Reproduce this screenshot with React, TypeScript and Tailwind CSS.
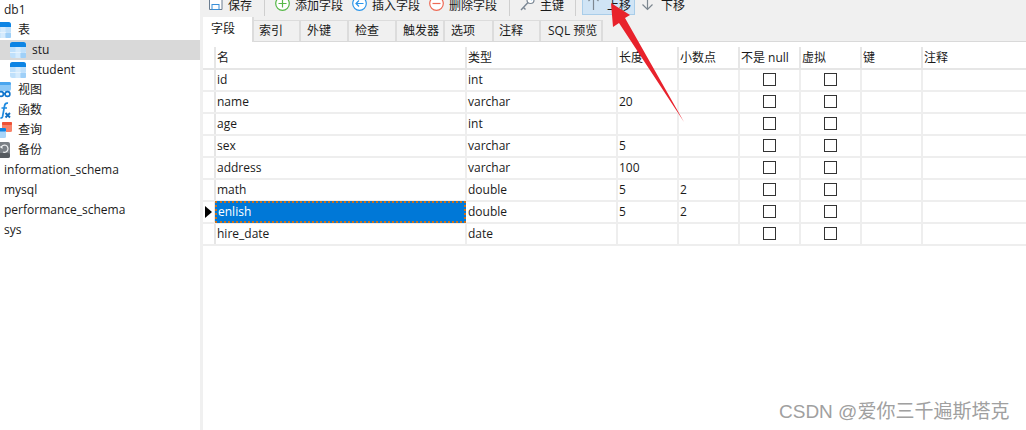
import React from 'react';

const FONT = '"Open Sans", "Noto Sans CJK SC", sans-serif';

const TableIcon = ({ className = '' }: { className?: string }) => (
  <svg width="16" height="16" viewBox="0 0 16 16" className={`shrink-0 ${className}`}>
    <rect x="0" y="0" width="16" height="16" rx="2.500" fill="#bfe0fb" />
    <path d="M0 5V2.500A2.500 2.500 0 0 1 2.500 0h11A2.500 2.500 0 0 1 16 2.500V5z" fill="#0c84e4" />
    <rect x="5.500" y="5" width="5" height="11" fill="#d5ebfd" />
    <rect x="0" y="10" width="16" height="1" fill="#e6f3fe" />
    <rect x="10.500" y="10.500" width="5.500" height="5.500" rx="1" fill="#9fd0f8" />
  </svg>
);

const ViewIcon = () => (
  <svg width="16" height="16" viewBox="0 0 16 16" className="ml-[-5px] shrink-0">
    <rect x="0" y="0" width="16" height="9" rx="2" fill="#8cc8f7" />
    <rect x="0" y="0" width="16" height="3" rx="1.500" fill="#4aa5ee" />
    <circle cx="6" cy="12" r="2.400" fill="#fff" stroke="#0f75cc" strokeWidth="1.600" />
    <circle cx="12.500" cy="12" r="2.400" fill="#fff" stroke="#0f75cc" strokeWidth="1.600" />
    <rect x="8.500" y="11" width="1.500" height="1.600" fill="#0f75cc" />
  </svg>
);

const FuncIcon = () => (
  <svg width="16" height="17" viewBox="0 0 16 17" className="ml-[-5px] shrink-0">
    <path d="M13 1.200C11 .8 10 1.600 9.600 3.500L7.600 14.500C7.300 15.800 6.600 16.200 5.400 15.800M6.500 6h5.500" fill="none" stroke="#1e8ae0" strokeWidth="1.700" />
    <path d="M10.500 11l4.500 4.500M15 11l-4.500 4.500" fill="none" stroke="#1170c4" strokeWidth="1.900" />
  </svg>
);

const QueryIcon = () => (
  <svg width="17" height="17" viewBox="0 0 17 17" className="ml-[-5px] shrink-0">
    <rect x="7" y="0" width="10" height="10" rx="1.500" fill="#f7836a" />
    <rect x="7" y="0" width="10" height="3" rx="1" fill="#ee5236" />
    <rect x="0" y="6" width="11" height="10" rx="1.500" fill="#a9d5f9" />
    <rect x="0" y="6" width="11" height="3.500" rx="1" fill="#0c84e4" />
  </svg>
);

const BackupIcon = () => (
  <svg width="15" height="16" viewBox="0 0 15 16" className="ml-[-5px] shrink-0">
    <rect x="0" y="0" width="15" height="16" rx="2" fill="#7a7f85" />
    <rect x="0" y="11" width="15" height="5" rx="2" fill="#565b60" />
    <path d="M6 5.500A3.600 3.600 0 1 1 8 10" fill="none" stroke="#eef0f1" strokeWidth="1.200" />
    <path d="M4.500 4.500h3v2.500z" fill="#eef0f1" />
  </svg>
);

const SaveIcon = () => (
  <svg width="15" height="15" viewBox="0 0 15 15" className="shrink-0">
    <path d="M1.500 1h10L14 3.500V13.500H1.500z" fill="#fff" stroke="#6b7d90" />
    <rect x="4" y="8.500" width="7" height="5" fill="#fff" stroke="#3a8fd8" />
  </svg>
);

const CircleIcon = ({ color, kind }: { color: string; kind: 'plus' | 'left' | 'minus' }) => (
  <svg width="15" height="15" viewBox="0 0 15 15" className="shrink-0">
    <circle cx="7.500" cy="7.500" r="6.800" fill="#fff" stroke={color} strokeWidth="1.200" />
    {kind === 'plus' && <path d="M7.500 3.500v8M3.500 7.500h8" stroke={color} strokeWidth="1.200" />}
    {kind === 'minus' && <path d="M3.500 7.500h8" stroke={color} strokeWidth="1.200" />}
    {kind === 'left' && <path d="M11.500 7.500H4M7 4.500l-3 3 3 3" fill="none" stroke={color} strokeWidth="1.200" />}
  </svg>
);

const KeyIcon = () => (
  <svg width="15" height="15" viewBox="0 0 15 15" className="shrink-0">
    <circle cx="10.500" cy="4" r="3.500" fill="#fff" stroke="#7b8794" strokeWidth="1.200" />
    <circle cx="11.500" cy="3.200" r="1" fill="#2b8fe0" />
    <path d="M8 6.500L1 14M3.500 11.500l2 2" fill="none" stroke="#7b8794" strokeWidth="1.400" />
  </svg>
);

const VArrow = ({ up }: { up: boolean }) => (
  <svg width="13" height="15" viewBox="0 0 13 15" className="shrink-0">
    <path d={up ? 'M6.500 1v14M1.500 6l5-5 5 5' : 'M6.500 0v13M1.500 8.500l5 5 5-5'} fill="none" stroke="#7d8790" strokeWidth="1.200" />
  </svg>
);

const Sep = ({ className }: { className: string }) => <div className={`h-[16px] w-px shrink-0 bg-[#cfcfcf] ${className}`} />;

const ToolBtn = ({ icon, label, className = '' }: { icon: React.ReactNode; label: string; className?: string }) => (
  <div className={`flex h-[15px] shrink-0 items-center gap-[5px] ${className}`}>
    <div className="-mt-[9px] shrink-0">{icon}</div>
    <span className="-mt-[3px] whitespace-nowrap">{label}</span>
  </div>
);

const tabs = [
  ['字段', 'w-[51px] pl-2'],
  ['索引', 'w-[47px] pl-[5px]'],
  ['外键', 'w-[48px] pl-[6px]'],
  ['检查', 'w-[48px] pl-[6px]'],
  ['触发器', 'w-[48px] pl-[6px]'],
  ['选项', 'w-[49px] pl-[6px]'],
  ['注释', 'w-[47px] pl-[5px]'],
  ['SQL 预览', 'w-[62px] pl-[7px]'],
];

const rows = [
  ['id', 'int', '', ''],
  ['name', 'varchar', '20', ''],
  ['age', 'int', '', ''],
  ['sex', 'varchar', '5', ''],
  ['address', 'varchar', '100', ''],
  ['math', 'double', '5', '2'],
  ['enlish', 'double', '5', '2'],
  ['hire_date', 'date', '', ''],
];

const headers = ['名', '类型', '长度', '小数点', '不是 null', '虚拟', '键', '注释'];

const GRID = 'grid grid-cols-[13px_251px_151px_61px_61px_61px_61px_61px_1fr]';

const Check = () => <div className="-mt-px h-[13px] w-[13px] border border-[#333]" />;

const TreeRow = ({ icon, label, active = false, pad = 'pl-0', gap = 'gap-[7px]' }: { icon?: React.ReactNode; label: string; active?: boolean; pad?: string; gap?: string }) => (
  <div className={`flex h-5 items-center ${gap} ${pad} ${active ? 'bg-[#d9d9d9]' : ''}`}>
    {icon}
    <span>{label}</span>
  </div>
);

export default function App() {
  return (
    <div className="relative flex h-[430px] w-[1026px] overflow-hidden bg-white text-[12px] leading-none text-[#1a1a1a]" style={{ fontFamily: FONT }}>
      {/* left tree */}
      <div className="w-[200px] shrink-0">
        <TreeRow label="db1" pad="pl-1" />
        <TreeRow label="表" icon={<TableIcon className="ml-[-5px]" />} />
        <TreeRow label="stu" icon={<TableIcon />} active pad="pl-[10px]" gap="gap-[6px]" />
        <TreeRow label="student" icon={<TableIcon />} pad="pl-[10px]" gap="gap-[6px]" />
        <TreeRow label="视图" icon={<ViewIcon />} />
        <TreeRow label="函数" icon={<FuncIcon />} />
        <TreeRow label="查询" icon={<QueryIcon />} gap="gap-[6px]" />
        <TreeRow label="备份" icon={<BackupIcon />} gap="gap-[8px]" />
        <TreeRow label="information_schema" pad="pl-1" />
        <TreeRow label="mysql" pad="pl-1" />
        <TreeRow label="performance_schema" pad="pl-1" />
        <TreeRow label="sys" pad="pl-1" />
      </div>
      <div className="w-[3px] shrink-0 bg-[#f0f0f0]" />

      {/* right panel */}
      <div className="flex min-w-0 flex-1 flex-col">
        <div className="flex h-[42px] shrink-0 flex-col border-b border-[#d9d9d9] bg-[#f0f0f0]">
          <div className="flex h-[17px] shrink-0 overflow-hidden pl-[5px]">
            <ToolBtn icon={<SaveIcon />} label="保存" />
            <Sep className="ml-[12px]" />
            <ToolBtn icon={<CircleIcon color="#56b848" kind="plus" />} label="添加字段" className="ml-[10px]" />
            <ToolBtn icon={<CircleIcon color="#2d96ea" kind="left" />} label="插入字段" className="ml-[9px]" />
            <ToolBtn icon={<CircleIcon color="#ee6a55" kind="minus" />} label="删除字段" className="ml-[9px]" />
            <Sep className="ml-[12px]" />
            <ToolBtn icon={<KeyIcon />} label="主键" className="ml-[10px]" />
            <Sep className="ml-[11px]" />
            <ToolBtn icon={<VArrow up />} label="上移" className="ml-[6px] w-[53px] gap-[7px] border-x border-b border-[#a9cde9] bg-[#d0e4f5] pl-[4px]" />
            <ToolBtn icon={<VArrow up={false} />} label="下移" className="ml-[6px] gap-[7px]" />
          </div>
          <div className="flex h-6 items-stretch">
            {tabs.map(([label, w], i) => (
              <div
                key={label}
                className={`flex items-center border-r-2 border-[#dcdcdc] ${w} ${i === 0 ? 'relative z-10 h-[25px] bg-white pb-[2px]' : 'mt-[3px] h-[21px] border-t'}`}
              >
                {label}
              </div>
            ))}
          </div>
        </div>

        {/* field grid */}
        <div className="pt-[5px]">
          <div className={`${GRID} h-[23px] border-b-2 border-[#e6e6e6]`}>
            <div className="border-r-2 border-[#e6e6e6]" />
            {headers.map(h => (
              <div key={h} className="flex items-center border-r-2 border-[#e6e6e6] pl-[1px] last:border-r-0">
                {h}
              </div>
            ))}
          </div>
          {rows.map(r => {
            const sel = r[0] === 'enlish';
            return (
              <div key={r[0]} className={`${GRID} h-[22px] border-b-2 border-[#eeeeee]`}>
                <div className="flex items-center justify-center border-r-2 border-[#e6e6e6]">
                  {sel && <div className="h-0 w-0 border-y-[6px] border-l-[7px] border-y-transparent border-l-black" />}
                </div>
                <div className={`flex items-center ${sel ? '-my-px -ml-px mr-[1px] border-2 border-dotted border-[#c9701c] bg-[#0078d7] pl-[1px] text-white' : 'border-r-2 border-[#eeeeee] pl-[1px]'}`}>
                  {r[0]}
                </div>
                <div className="flex items-center border-r-2 border-[#eeeeee] pl-[1px]">{r[1]}</div>
                <div className="flex items-center border-r-2 border-[#eeeeee] pl-[1px]">{r[2]}</div>
                <div className="flex items-center border-r-2 border-[#eeeeee] pl-[1px]">{r[3]}</div>
                <div className="flex items-center justify-center border-r-2 border-[#eeeeee]"><Check /></div>
                <div className="flex items-center justify-center border-r-2 border-[#eeeeee]"><Check /></div>
                <div className="border-r-2 border-[#eeeeee]" />
                <div />
              </div>
            );
          })}
        </div>
      </div>

      {/* red annotation arrow */}
      <svg width="1026" height="430" viewBox="0 0 1026 430" className="pointer-events-none absolute left-0 top-0">
        <path d="M611 3L630 15L625 18L684 122L619 23L613 27z" fill="#e8222c" />
      </svg>

      {/* watermark */}
      <div className="absolute left-[779px] top-[402px] text-[19px] leading-none text-[#a0a0a0]" style={{ fontFamily: '"Liberation Sans", "Noto Sans CJK SC", sans-serif' }}>
        CSDN @爱你三千遍斯塔克
      </div>
    </div>
  );
}
